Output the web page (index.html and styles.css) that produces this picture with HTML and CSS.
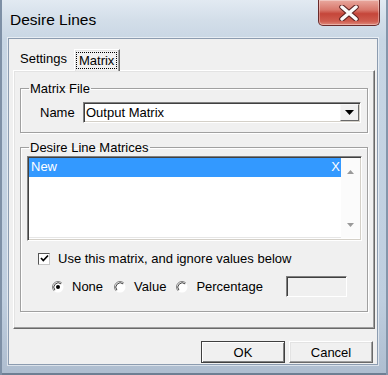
FILE: index.html
```html
<!DOCTYPE html>
<html>
<head>
<meta charset="utf-8">
<link rel="stylesheet" href="styles.css">
</head>
<body>
<div class="window">
  <div class="titlebar">
    <span class="title">Desire Lines</span>
    <div class="close">
      <svg width="22" height="16" viewBox="0 0 22 16">
        <path d="M4 2 L18 14 M18 2 L4 14" stroke="#5b2020" stroke-width="5.5" stroke-linecap="round"/>
        <path d="M4 2 L18 14 M18 2 L4 14" stroke="#fafafa" stroke-width="3.5" stroke-linecap="round"/>
      </svg>
    </div>
  </div>
  <div class="client">
    <div class="tabs">
      <div class="tab">Settings</div>
      <div class="tab active"><span class="focus">Matrix</span></div>
    </div>
    <div class="panel">
      <fieldset class="group g1">
        <legend>Matrix File</legend>
        <div class="name-row">
          <span class="name-label">Name</span>
          <div class="select">
            <span class="select-val">Output Matrix</span>
            <span class="drop">
              <svg width="9" height="5" viewBox="0 0 9 5"><path d="M0 0 H9 L4.5 5 Z" fill="#000"/></svg>
            </span>
          </div>
        </div>
      </fieldset>
      <fieldset class="group g2">
        <legend>Desire Line Matrices</legend>
        <div class="listbox">
          <div class="items">
            <div class="item selected"><span>New</span><span>X</span></div>
          </div>
          <div class="vscroll">
            <svg width="7" height="4" viewBox="0 0 7 4"><path d="M0 4 L3.5 0 L7 4 Z" fill="#9a9a9a"/></svg>
            <svg width="7" height="4" viewBox="0 0 7 4"><path d="M0 0 H7 L3.5 4 Z" fill="#9a9a9a"/></svg>
          </div>
        </div>
        <div class="check-row">
          <span class="checkbox">
            <svg width="9" height="9" viewBox="0 0 9 9"><path d="M1 4 L3.3 6.5 L8 1.5" fill="none" stroke="#000" stroke-width="1.7"/></svg>
          </span>
          <span>Use this matrix, and ignore values below</span>
        </div>
        <div class="radio-row">
          <span class="radio">
            <svg width="12" height="12" viewBox="0 0 12 12">
              <circle cx="6" cy="6" r="5.5" fill="#fff"/>
              <path d="M2.1 9.9 A5.5 5.5 0 0 1 9.9 2.1" fill="none" stroke="#808080"/>
              <path d="M2.9 9.1 A4.4 4.4 0 0 1 9.1 2.9" fill="none" stroke="#404040"/>
              <circle cx="6" cy="6" r="2" fill="#000"/>
            </svg>
          </span>
          <span class="rlabel r1">None</span>
          <span class="radio">
            <svg width="12" height="12" viewBox="0 0 12 12">
              <circle cx="6" cy="6" r="5.5" fill="#fff"/>
              <path d="M2.1 9.9 A5.5 5.5 0 0 1 9.9 2.1" fill="none" stroke="#808080"/>
              <path d="M2.9 9.1 A4.4 4.4 0 0 1 9.1 2.9" fill="none" stroke="#404040"/>
            </svg>
          </span>
          <span class="rlabel r2">Value</span>
          <span class="radio">
            <svg width="12" height="12" viewBox="0 0 12 12">
              <circle cx="6" cy="6" r="5.5" fill="#fff"/>
              <path d="M2.1 9.9 A5.5 5.5 0 0 1 9.9 2.1" fill="none" stroke="#808080"/>
              <path d="M2.9 9.1 A4.4 4.4 0 0 1 9.1 2.9" fill="none" stroke="#404040"/>
            </svg>
          </span>
          <span class="rlabel r3">Percentage</span>
          <span class="textbox"></span>
        </div>
      </fieldset>
    </div>
    <div class="footer">
      <button class="btn default">OK</button>
      <button class="btn">Cancel</button>
    </div>
  </div>
</div>
</body>
</html>
```

FILE: styles.css
```css
html, body {
  margin: 0;
  padding: 0;
}
body {
  font-family: "Liberation Sans", Arial, sans-serif;
  font-size: 13px;
  color: #000;
  background: #c6d4e3;
}
.window {
  width: 388px;
  height: 375px;
  box-sizing: border-box;
  padding: 0 10px 10px 8px;
  display: flex;
  flex-direction: column;
  background: linear-gradient(180deg, #e2eaf2 0px, #d3dee9 20px, #c8d6e4 40px, #bfcedf 300px, #aebdcf 375px);
  box-shadow: inset 2px 0 0 #7e90a6, inset -2px 0 0 #8496ab, inset 0 -2px 0 #6e7f93;
}
.titlebar {
  height: 38px;
  flex: none;
  display: flex;
  align-items: flex-start;
}
.title {
  margin: 11px 0 0 2px;
  font-size: 15.5px;
  line-height: 18px;
  color: #000;
}
.close {
  margin-left: auto;
  margin-right: -2px;
  width: 62px;
  height: 26px;
  box-sizing: border-box;
  border: 1px solid #6a2a2a;
  border-top: none;
  border-radius: 0 0 5px 5px;
  background: linear-gradient(180deg, #e9a99f 0%, #d8776b 40%, #c5463a 55%, #cf5d4f 85%, #e08a7c 100%);
  display: flex;
  align-items: center;
  justify-content: center;
  box-shadow: inset 0 0 0 1px rgba(255,255,255,0.35);
}
.client {
  flex: 1;
  display: flex;
  flex-direction: column;
  background: #f0f0f0;
  border: 1px solid #8c9cb0;
  box-shadow: 0 0 0 1px rgba(255,255,255,0.55);
}
.tabs {
  flex: none;
  display: flex;
  align-items: flex-end;
  height: 31px;
  margin-left: 4px;
}
.tab {
  height: 20px;
  line-height: 18px;
  padding: 0 7px;
}
.tab.active {
  position: relative;
  z-index: 1;
  height: 22px;
  box-sizing: border-box;
  padding: 2px 2px 0 1px;
  margin-bottom: -1px;
  background: #f0f0f0;
  border-style: solid;
  border-width: 1px 1px 0 1px;
  border-color: #ffffff #696969 transparent #ffffff;
  box-shadow: inset -1px 0 0 #a0a0a0, inset 1px 1px 0 #e3e3e3;
}
.focus {
  display: block;
  border: 1px dotted #000;
  padding: 0 2px;
  line-height: 15px;
}
.panel {
  flex: none;
  height: 259px;
  box-sizing: border-box;
  margin: 0 2px 0 4px;
  padding: 0 6px 0 6px;
  border-style: solid;
  border-width: 1px;
  border-color: #ffffff #696969 #696969 #ffffff;
  box-shadow: inset -1px -1px 0 #a0a0a0, inset 1px 1px 0 #e3e3e3;
}
.group {
  margin: 10px 0 0 0;
  border: 1px solid #a0a0a0;
  box-shadow: inset 1px 1px 0 #fff, 1px 1px 0 #fff;
  min-width: 0;
}
.group legend {
  padding: 0 1px;
  line-height: 15px;
}
.g1 {
  padding: 0 6px 9px 8px;
}
.name-row {
  display: flex;
  align-items: center;
  margin-top: 6px;
  padding-left: 11px;
  height: 21px;
}
.name-label {
  width: 43px;
}
.select {
  flex: 1;
  height: 21px;
  box-sizing: border-box;
  display: flex;
  align-items: center;
  background: #fff;
  border-style: solid;
  border-width: 1px;
  border-color: #808080 #ffffff #ffffff #808080;
  box-shadow: inset 1px 1px 0 #404040, inset -1px -1px 0 #d4d0c8;
}
.select-val {
  flex: 1;
  padding-left: 2px;
}
.drop {
  width: 19px;
  height: 17px;
  margin-right: 1px;
  box-sizing: border-box;
  display: flex;
  align-items: center;
  justify-content: center;
  background: #f0f0f0;
  border-style: solid;
  border-width: 1px;
  border-color: #f7f7f7 #696969 #696969 #f7f7f7;
}
.g2 {
  margin-top: 7px;
  padding: 0 5px 14px 6px;
}
.g2 legend {
  margin-left: 2px;
}
.listbox {
  margin-top: 1px;
  height: 85px;
  box-sizing: border-box;
  display: flex;
  background: #fff;
  border-style: solid;
  border-width: 1px;
  border-color: #808080 #ffffff #ffffff #808080;
  box-shadow: inset 1px 1px 0 #404040, inset -1px -1px 0 #d4d0c8;
  padding: 1px 1px 2px 1px;
}
.items {
  flex: 1;
  border-bottom: 1px solid #e6e6e6;
}
.item {
  display: flex;
  justify-content: space-between;
  height: 19px;
  line-height: 18px;
  padding: 0 1px 0 2px;
}
.item.selected {
  background: #3399ff;
  color: #fff;
}
.vscroll {
  width: 19px;
  display: flex;
  flex-direction: column;
  align-items: center;
  justify-content: space-between;
  padding: 12px 0 11px;
  box-sizing: border-box;
  background: #fbfbfb;
}
.check-row {
  display: flex;
  align-items: center;
  margin: 11px 0 0 11px;
  height: 13px;
}
.checkbox {
  width: 12px;
  height: 12px;
  box-sizing: border-box;
  margin-right: 8px;
  display: flex;
  align-items: center;
  justify-content: center;
  background: #fff;
  border-style: solid;
  border-width: 1px;
  border-color: #555 #c8c8c8 #c8c8c8 #555;
}
.radio-row {
  display: flex;
  align-items: center;
  margin: 11px 0 0 25px;
  height: 21px;
}
.radio {
  display: flex;
  width: 12px;
  height: 12px;
}
.rlabel {
  margin-left: 8px;
}
.r1 { margin-right: 11px; }
.r2 { margin-right: 10px; }
.r3 { margin-right: 23px; }
.textbox {
  width: 61px;
  height: 21px;
  box-sizing: border-box;
  border-style: solid;
  border-width: 1px;
  border-color: #808080 #ffffff #ffffff #808080;
  box-shadow: inset 1px 1px 0 #404040;
  background: #f0f0f0;
}
.footer {
  flex: 1;
  display: flex;
  justify-content: flex-end;
  align-items: flex-start;
  gap: 4px;
  padding: 12px 4px 0 0;
}
.btn {
  width: 84px;
  height: 22px;
  box-sizing: border-box;
  font-family: "Liberation Sans", Arial, sans-serif;
  font-size: 13px;
  color: #000;
  background: #f0f0f0;
  border: 1px solid #696969;
  border-color: #ffffff #696969 #696969 #ffffff;
  box-shadow: inset -1px -1px 0 #a0a0a0, inset 1px 1px 0 #e3e3e3;
  padding: 0;
}
.btn.default {
  border-color: #404040;
  box-shadow: inset 1px 1px 0 #fff, inset -1px -1px 0 #808080;
}
```
